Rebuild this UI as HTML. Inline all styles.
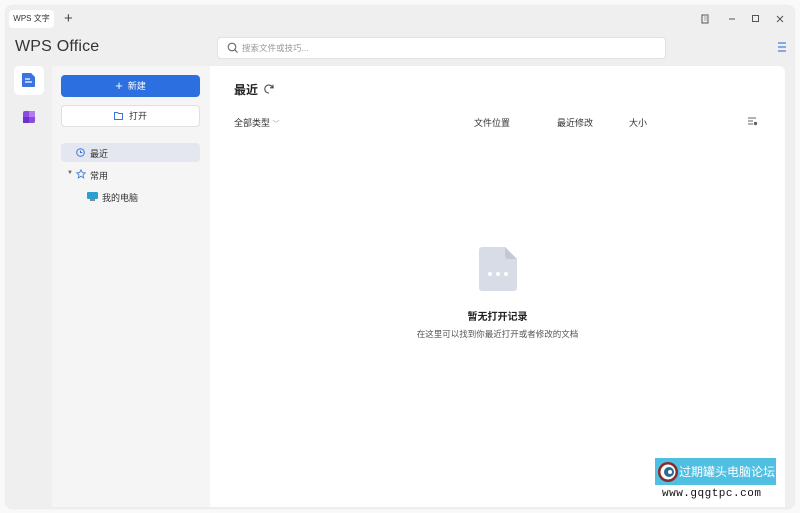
<!DOCTYPE html>
<html><head><meta charset="utf-8"><style>
*{margin:0;padding:0;box-sizing:border-box}
body{width:800px;height:513px;background:#f9f9f9;font-family:"Liberation Sans","Noto Sans CJK SC",sans-serif;position:relative;overflow:hidden;color:#333}
.win{position:absolute;left:6px;top:6px;width:788px;height:502px;background:#efefef;border-radius:6px;box-shadow:0 0 2px rgba(0,0,0,.15)}
.a{position:absolute}
.tab{left:9px;top:10px;width:45px;height:18px;background:#fff;border-radius:4px;font-size:8px;line-height:18px;text-align:center;color:#333}
.side{left:52px;top:66px;width:158px;height:441px;background:#f5f5f5}
.main{left:210px;top:66px;width:575px;height:441px;background:#fff;border-radius:0 6px 0 0}
.btn{border-radius:4px;font-size:9px;text-align:center;line-height:22px}
.t9{font-size:9px}
</style></head><body>
<div class="win"></div>
<div class="a tab">WPS 文字</div>
<div class="a" style="left:64px;top:10px;font-size:15px;color:#444;line-height:18px">+</div>
<div class="a" style="left:15px;top:38px;font-size:16px;color:#333;letter-spacing:.2px">WPS Office</div>
<div class="a" style="left:217px;top:37px;width:449px;height:22px;background:#fff;border:1px solid #e2e2e2;border-radius:4px"></div>
<svg class="a" style="left:227px;top:42px" width="11" height="11"><circle cx="5" cy="5" r="3.8" fill="none" stroke="#666" stroke-width="1.1"/><line x1="7.8" y1="7.8" x2="10.5" y2="10.5" stroke="#666" stroke-width="1.1"/></svg>
<div class="a t9" style="left:242px;top:42px;color:#999;font-size:8.5px">搜索文件或技巧...</div>
<svg class="a" style="left:700px;top:12px" width="90" height="14"><rect x="2" y="3" width="6" height="8" fill="none" stroke="#555"/><rect x="4" y="2" width="5" height="7" fill="#aaa" opacity=".5"/><line x1="29" y1="7" x2="35" y2="7" stroke="#555"/><rect x="52.5" y="3.5" width="6" height="6" fill="none" stroke="#555"/><path d="M77 4l6 6M83 4l-6 6" stroke="#555"/></svg>
<svg class="a" style="left:778px;top:42px" width="8" height="10"><path d="M0 1h8M0 5h8M0 9h8" stroke="#4a7fd8" stroke-width="1.3"/></svg>
<div class="a" style="left:14px;top:66px;width:30px;height:29px;background:#fff;border-radius:5px"></div>
<svg class="a" style="left:22px;top:73px" width="13" height="14"><path d="M0 1a1 1 0 011-1h8l4 4v9a1 1 0 01-1 1H1a1 1 0 01-1-1z" fill="#3b74e0"/><path d="M3 6h5M3 9h7" stroke="#fff" stroke-width="1.2"/></svg>
<svg class="a" style="left:23px;top:111px" width="12" height="12"><rect width="12" height="12" rx="2" fill="#8a4ce0"/><rect x="6" y="0" width="6" height="6" fill="#b07cf0"/><rect x="0" y="6" width="6" height="6" fill="#6d2fd0"/></svg>
<div class="a side"></div>
<div class="a main"></div>
<div class="a btn" style="left:61px;top:75px;width:139px;height:22px;background:#2b6fe0;color:#fff"><span style="font-size:13px;vertical-align:-1px">+</span>&nbsp; 新建</div>
<div class="a btn" style="left:61px;top:105px;width:139px;height:22px;background:#fff;border:1px solid #e0e0e0;color:#333;line-height:20px"><svg width="10" height="9" style="vertical-align:-1px"><path d="M.5 1.5h3l1 1h4v6h-8z" fill="none" stroke="#3b74e0"/></svg>&nbsp; 打开</div>
<div class="a" style="left:61px;top:143px;width:139px;height:19px;background:#e4e7ef;border-radius:4px"></div>
<svg class="a" style="left:76px;top:148px" width="9" height="9"><circle cx="4.5" cy="4.5" r="3.8" fill="none" stroke="#3b74e0"/><path d="M4.5 2.5v2h1.8" stroke="#3b74e0" fill="none"/></svg>
<div class="a t9" style="left:90px;top:147px;color:#333">最近</div>
<div class="a" style="left:67px;top:170px;font-size:6px;color:#666">▼</div>
<svg class="a" style="left:76px;top:169px" width="10" height="10"><path d="M5 .8l1.3 2.8 3 .3-2.3 2 .7 3-2.7-1.6-2.7 1.6.7-3-2.3-2 3-.3z" fill="none" stroke="#4a7fd8" stroke-width=".9"/></svg>
<div class="a t9" style="left:90px;top:169px">常用</div>
<div class="a" style="left:87px;top:192px;width:11px;height:7px;background:#2a9fd0;border-radius:1px"></div>
<div class="a" style="left:90px;top:199px;width:5px;height:2px;background:#888"></div>
<div class="a t9" style="left:102px;top:191px">我的电脑</div>
<div class="a" style="left:234px;top:81px;font-size:12px;font-weight:bold;color:#222">最近</div>
<svg class="a" style="left:264px;top:84px" width="10" height="10"><path d="M8.5 3.5A4 4 0 105 9" fill="none" stroke="#444" stroke-width="1.1"/><path d="M9 .8v3H6" fill="none" stroke="#444" stroke-width="1.1"/></svg>
<div class="a t9" style="left:234px;top:116px">全部类型 <span style="color:#999;font-size:7px">﹀</span></div>
<div class="a t9" style="left:474px;top:116px">文件位置</div>
<div class="a t9" style="left:557px;top:116px">最近修改</div>
<div class="a t9" style="left:629px;top:116px">大小</div>
<svg class="a" style="left:748px;top:117px" width="10" height="9"><path d="M0 1h8M0 4h5M0 7h5" stroke="#666"/><circle cx="7.5" cy="6.5" r="1.7" fill="#666"/></svg>
<svg class="a" style="left:479px;top:247px" width="38" height="44"><path d="M3 0h23l12 12v29a3 3 0 01-3 3H3a3 3 0 01-3-3V3a3 3 0 013-3z" fill="#d8dce6"/><path d="M26 0v9a3 3 0 003 3h9z" fill="#c2c8d6"/><circle cx="11" cy="27" r="2" fill="#fff"/><circle cx="19" cy="27" r="2" fill="#fff"/><circle cx="27" cy="27" r="2" fill="#fff"/></svg>
<div class="a" style="left:210px;width:575px;top:308px;text-align:center;font-size:10px;font-weight:bold;color:#222">暂无打开记录</div>
<div class="a" style="left:210px;width:575px;top:328px;text-align:center;font-size:8.5px;color:#555">在这里可以找到你最近打开或者修改的文档</div>
<div class="a" style="left:655px;top:458px;width:121px;height:27px;background:#4fbfe2"></div>
<svg class="a" style="left:657px;top:461px" width="22" height="22"><circle cx="11" cy="11" r="10" fill="#8a2a2a"/><circle cx="11" cy="11" r="7.5" fill="#fff"/><circle cx="12" cy="11" r="5" fill="#2a6a8a"/><circle cx="13" cy="11" r="2" fill="#fff"/></svg>
<div class="a" style="left:679px;top:464px;font-size:12px;color:#fff;font-family:'Noto Sans CJK SC',sans-serif;line-height:15px;white-space:nowrap">过期罐头电脑论坛</div>
<div class="a" style="left:662px;top:488px;font-size:11px;color:#111;font-family:'Liberation Mono',monospace;letter-spacing:.5px">www.gqgtpc.com</div>
</body></html>
